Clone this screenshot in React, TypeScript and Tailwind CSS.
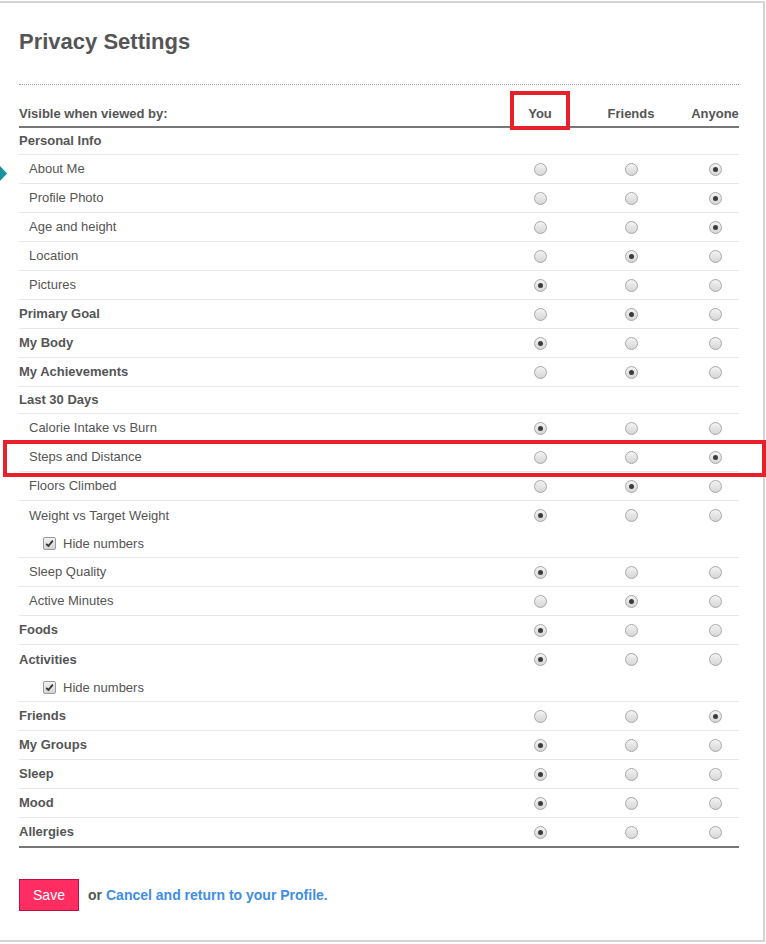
import React from 'react';

type Row = {
  label: string;
  kind: 'cat' | 'catRadio' | 'item';
  value?: number;
  hide?: boolean;
};

const rows: Row[] = [
  { label: 'Personal Info', kind: 'cat' },
  { label: 'About Me', kind: 'item', value: 2 },
  { label: 'Profile Photo', kind: 'item', value: 2 },
  { label: 'Age and height', kind: 'item', value: 2 },
  { label: 'Location', kind: 'item', value: 1 },
  { label: 'Pictures', kind: 'item', value: 0 },
  { label: 'Primary Goal', kind: 'catRadio', value: 1 },
  { label: 'My Body', kind: 'catRadio', value: 0 },
  { label: 'My Achievements', kind: 'catRadio', value: 1 },
  { label: 'Last 30 Days', kind: 'cat' },
  { label: 'Calorie Intake vs Burn', kind: 'item', value: 0 },
  { label: 'Steps and Distance', kind: 'item', value: 2 },
  { label: 'Floors Climbed', kind: 'item', value: 1 },
  { label: 'Weight vs Target Weight', kind: 'item', value: 0, hide: true },
  { label: 'Sleep Quality', kind: 'item', value: 0 },
  { label: 'Active Minutes', kind: 'item', value: 1 },
  { label: 'Foods', kind: 'catRadio', value: 0 },
  { label: 'Activities', kind: 'catRadio', value: 0, hide: true },
  { label: 'Friends', kind: 'catRadio', value: 2 },
  { label: 'My Groups', kind: 'catRadio', value: 0 },
  { label: 'Sleep', kind: 'catRadio', value: 0 },
  { label: 'Mood', kind: 'catRadio', value: 0 },
  { label: 'Allergies', kind: 'catRadio', value: 0 },
];

function Radio({ checked }: { checked: boolean }) {
  return (
    <div className="w-[13px] h-[13px] rounded-full border border-[#a8a8a8] bg-linear-to-b from-[#f3f3f3] to-[#d6d6d6] flex items-center justify-center">
      {checked && <div className="w-[5px] h-[5px] rounded-full bg-[#3c3c3c]" />}
    </div>
  );
}

function Check() {
  return (
    <div className="w-[13px] h-[13px] rounded-[2px] border border-[#9a9a9a] bg-linear-to-b from-[#f3f3f3] to-[#d3d3d3] flex items-center justify-center">
      <svg width="9" height="9" viewBox="0 0 9 9">
        <path d="M1.2 4.8 L3.4 7 L7.8 1.6" fill="none" stroke="#333" strokeWidth="1.8" />
      </svg>
    </div>
  );
}

function Cols({ value }: { value: number }) {
  return (
    <>
      <div className="w-[80px] flex justify-center">
        <Radio checked={value === 0} />
      </div>
      <div className="w-[102px] flex justify-center">
        <Radio checked={value === 1} />
      </div>
      <div className="w-[57px] pl-[9px] flex justify-center">
        <Radio checked={value === 2} />
      </div>
    </>
  );
}

export default function App() {
  return (
    <div
      className="relative bg-white min-h-[944px] pt-px text-[#555]"
      style={{ fontFamily: '"Liberation Sans", Arial, sans-serif' }}
    >
      <div className="w-[765px] border-t-2 border-r-2 border-b-2 border-[#d4d4d4] pl-[19px] pr-[24px]">
        <div className="pt-[26px] pb-[29px] border-b border-dotted border-[#999]">
          <h1 className="text-[22px] leading-[26px] font-bold text-[#555]">Privacy Settings</h1>
        </div>

        <div className="h-[43px] flex items-end pb-[5px] border-b-2 border-[#777] text-[13px] leading-[15px] font-bold">
          <div className="flex-1">Visible when viewed by:</div>
          <div className="w-[80px] text-center">You</div>
          <div className="w-[102px] text-center">Friends</div>
          <div className="w-[57px] pl-[9px] text-center">Anyone</div>
        </div>

        {rows.map((r, i) => {
          const last = i === rows.length - 1;
          const border = last ? 'border-b-2 border-[#777]' : 'border-b border-[#e6e6e6]';
          if (r.kind === 'cat') {
            return (
              <div key={r.label} className={`h-[27px] flex items-center text-[13px] font-bold ${border}`}>
                {r.label}
              </div>
            );
          }
          return (
            <div key={r.label} className={border}>
              <div className={`${r.hide ? 'h-[29px]' : 'h-[28px]'} flex items-center text-[13px]`}>
                <div className={`flex-1 ${r.kind === 'item' ? 'pl-[10px]' : 'font-bold'}`}>{r.label}</div>
                <Cols value={r.value ?? 0} />
              </div>
              {r.hide && (
                <div className="h-[27px] flex items-center pl-[24px] text-[13px]">
                  <Check />
                  <span className="ml-[7px]">Hide numbers</span>
                </div>
              )}
            </div>
          );
        })}

        <div className="pt-[31px] pb-[29px] flex items-center">
          <button className="w-[60px] h-[32px] bg-[#ff2d62] border border-[#b8123f] text-white text-[14px]">
            Save
          </button>
          <span className="ml-[9px] text-[14px] font-bold text-[#555]">or</span>
          <a className="ml-[4px] text-[14px] font-bold text-[#3f8ee6]">Cancel and return to your Profile.</a>
        </div>
      </div>

      <svg className="absolute left-0 top-[166px]" width="7" height="15" viewBox="0 0 7 15">
        <polygon points="0,0 7,7.5 0,15" fill="#17939f" />
      </svg>
      <div className="absolute left-[510px] top-[91px] w-[60px] h-[39px] border-4 border-[#e8202a]" />
      <div className="absolute left-[3px] top-[440px] w-[763px] h-[37px] border-4 border-[#e8202a]" />
    </div>
  );
}
